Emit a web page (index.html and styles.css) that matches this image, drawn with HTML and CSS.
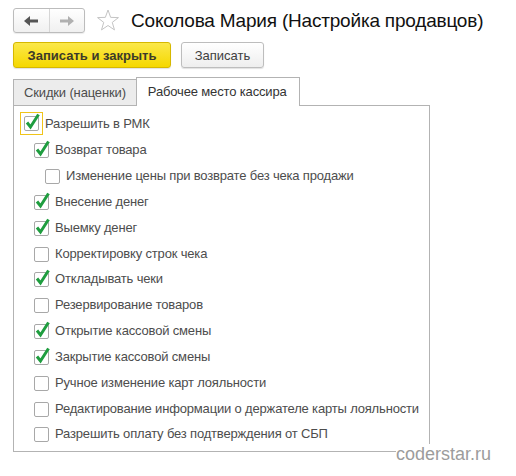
FILE: index.html
```html
<!DOCTYPE html>
<html lang="ru">
<head>
<meta charset="utf-8">
<title>Соколова Мария (Настройка продавцов)</title>
<link rel="stylesheet" href="styles.css">
</head>
<body>
<div class="page">
  <div class="header">
    <div class="nav">
      <div class="navbtn">
        <svg width="14" height="12" viewBox="0 0 14 12"><polygon points="0,6 6,1 6,11" fill="#555"/><rect x="5" y="4.5" width="9" height="3" fill="#555"/></svg>
      </div>
      <div class="navbtn">
        <svg width="14" height="12" viewBox="0 0 14 12"><polygon points="14,6 8,1 8,11" fill="#b0b0b0"/><rect x="0" y="4.5" width="9" height="3" fill="#b0b0b0"/></svg>
      </div>
    </div>
    <svg class="star" width="24" height="23" viewBox="0 0 24 23"><polygon points="12,1 14.65,8.36 22.46,8.6 16.28,13.39 18.47,20.9 12,16.5 5.53,20.9 7.72,13.39 1.54,8.6 9.35,8.36" fill="none" stroke="#c4c4c4" stroke-width="1" stroke-linejoin="round"/></svg>
    <h1 class="title">Соколова Мария (Настройка продавцов)</h1>
  </div>

  <div class="toolbar">
    <button class="btn primary">Записать и закрыть</button>
    <button class="btn second">Записать</button>
  </div>

  <div class="tabs">
    <div class="tab">Скидки (наценки)</div>
    <div class="tab active">Рабочее место кассира</div>
  </div>

  <div class="panel">
    <div class="row l0">
      <span class="focus"><span class="cb on"><svg width="15" height="15" viewBox="0 0 15 15"><path d="M3 6.5 L6.5 11 L14.5 -1.5" fill="none" stroke="#1f9d3f" stroke-width="3"/></svg></span></span>
      <span class="lbl">Разрешить в РМК</span>
    </div>
    <div class="row l1">
      <span class="cb on"><svg width="15" height="15" viewBox="0 0 15 15"><path d="M3 6.5 L6.5 11 L14.5 -1.5" fill="none" stroke="#1f9d3f" stroke-width="3"/></svg></span>
      <span class="lbl">Возврат товара</span>
    </div>
    <div class="row l2">
      <span class="cb"></span>
      <span class="lbl">Изменение цены при возврате без чека продажи</span>
    </div>
    <div class="row l1">
      <span class="cb on"><svg width="15" height="15" viewBox="0 0 15 15"><path d="M3 6.5 L6.5 11 L14.5 -1.5" fill="none" stroke="#1f9d3f" stroke-width="3"/></svg></span>
      <span class="lbl">Внесение денег</span>
    </div>
    <div class="row l1">
      <span class="cb on"><svg width="15" height="15" viewBox="0 0 15 15"><path d="M3 6.5 L6.5 11 L14.5 -1.5" fill="none" stroke="#1f9d3f" stroke-width="3"/></svg></span>
      <span class="lbl">Выемку денег</span>
    </div>
    <div class="row l1">
      <span class="cb"></span>
      <span class="lbl">Корректировку строк чека</span>
    </div>
    <div class="row l1">
      <span class="cb on"><svg width="15" height="15" viewBox="0 0 15 15"><path d="M3 6.5 L6.5 11 L14.5 -1.5" fill="none" stroke="#1f9d3f" stroke-width="3"/></svg></span>
      <span class="lbl">Откладывать чеки</span>
    </div>
    <div class="row l1">
      <span class="cb"></span>
      <span class="lbl">Резервирование товаров</span>
    </div>
    <div class="row l1">
      <span class="cb on"><svg width="15" height="15" viewBox="0 0 15 15"><path d="M3 6.5 L6.5 11 L14.5 -1.5" fill="none" stroke="#1f9d3f" stroke-width="3"/></svg></span>
      <span class="lbl">Открытие кассовой смены</span>
    </div>
    <div class="row l1">
      <span class="cb on"><svg width="15" height="15" viewBox="0 0 15 15"><path d="M3 6.5 L6.5 11 L14.5 -1.5" fill="none" stroke="#1f9d3f" stroke-width="3"/></svg></span>
      <span class="lbl">Закрытие кассовой смены</span>
    </div>
    <div class="row l1">
      <span class="cb"></span>
      <span class="lbl">Ручное изменение карт лояльности</span>
    </div>
    <div class="row l1">
      <span class="cb"></span>
      <span class="lbl">Редактирование информации о держателе карты лояльности</span>
    </div>
    <div class="row l1">
      <span class="cb"></span>
      <span class="lbl">Разрешить оплату без подтверждения от СБП</span>
    </div>
  </div>

  <div class="watermark">coderstar.ru</div>
</div>
</body>
</html>
```

FILE: styles.css
```css
html, body {
  margin: 0;
  background: #fff;
}
body {
  font-family: "Liberation Sans", Arial, sans-serif;
  color: #4d4d4d;
}
.page {
  position: relative;
  width: 516px;
  height: 476px;
  box-sizing: border-box;
  padding: 8px 0 0 13px;
  overflow: hidden;
}
.header {
  display: flex;
  align-items: center;
  height: 25px;
}
.nav {
  display: flex;
  width: 72px;
  height: 25px;
  box-sizing: border-box;
  border: 1px solid #bcbcbc;
  border-radius: 3px;
  background: linear-gradient(#ffffff, #f0f0f0);
  box-shadow: 0 1px 1px rgba(0,0,0,0.08);
}
.navbtn {
  flex: 1;
  display: flex;
  align-items: center;
  justify-content: center;
}
.navbtn + .navbtn {
  border-left: 1px solid #d6d6d6;
}
.star {
  margin-left: 11px;
  flex: none;
}
.title {
  margin: 0 0 0 11px;
  font-size: 19px;
  letter-spacing: -0.2px;
  font-weight: normal;
  color: #111;
  line-height: 25px;
  white-space: nowrap;
}
.toolbar {
  display: flex;
  gap: 10px;
  margin-top: 9px;
}
.btn {
  height: 26px;
  box-sizing: border-box;
  border: 1px solid #bdbdbd;
  border-radius: 3px;
  background: linear-gradient(#ffffff, #eeeeee);
  font-family: "Liberation Sans", Arial, sans-serif;
  font-size: 13px;
  color: #404040;
  padding: 0;
  box-shadow: 0 1px 1px rgba(0,0,0,0.12);
}
.btn.primary {
  width: 158px;
  background: linear-gradient(#fbe84a, #f5d800);
  border-color: #d6b800;
  font-weight: bold;
  color: #3c3a2a;
}
.btn.second {
  width: 83px;
}
.tabs {
  display: flex;
  align-items: flex-end;
  margin-top: 9px;
  height: 28px;
}
.tab {
  height: 26px;
  box-sizing: border-box;
  border: 1px solid #b3b3b3;
  border-bottom: none;
  background: #ececec;
  padding: 0 10px 0 10px;
  line-height: 25px;
  font-size: 13px;
  letter-spacing: -0.15px;
  color: #4d4d4d;
  white-space: nowrap;
}
.tab.active {
  position: relative;
  z-index: 1;
  height: 29px;
  margin-bottom: -1px;
  margin-left: -1px;
  background: #fff;
  padding: 0 12px 0 11px;
  line-height: 27px;
  color: #333;
}
.panel {
  width: 417px;
  height: 347px;
  box-sizing: border-box;
  border: 1px solid #b3b3b3;
  padding-top: 5px;
}
.row {
  display: flex;
  align-items: center;
  height: 25.83px;
  font-size: 13px;
  letter-spacing: -0.17px;
}
.row.l0 { padding-left: 6px; }
.row.l1 { padding-left: 20px; }
.row.l2 { padding-left: 31px; }
.focus {
  width: 23px;
  height: 23px;
  box-sizing: border-box;
  border: 1px solid #f0c419;
  display: flex;
  align-items: center;
  justify-content: center;
  flex: none;
}
.cb {
  position: relative;
  width: 15px;
  height: 15px;
  box-sizing: border-box;
  border: 1px solid #a8a8a8;
  border-radius: 2px;
  background: #fff;
  flex: none;
  margin-top: 2px;
}
.focus .cb { margin-top: 0; }
.cb svg {
  position: absolute;
  left: -1px;
  top: -1px;
  overflow: visible;
}
.lbl {
  margin-left: 6px;
  white-space: nowrap;
}
.l0 .lbl { margin-left: 2px; }
.watermark {
  position: absolute;
  left: 396px;
  top: 444px;
  font-size: 18px;
  line-height: 21px;
  color: #9c9c9c;
  background: #fff;
}
```
